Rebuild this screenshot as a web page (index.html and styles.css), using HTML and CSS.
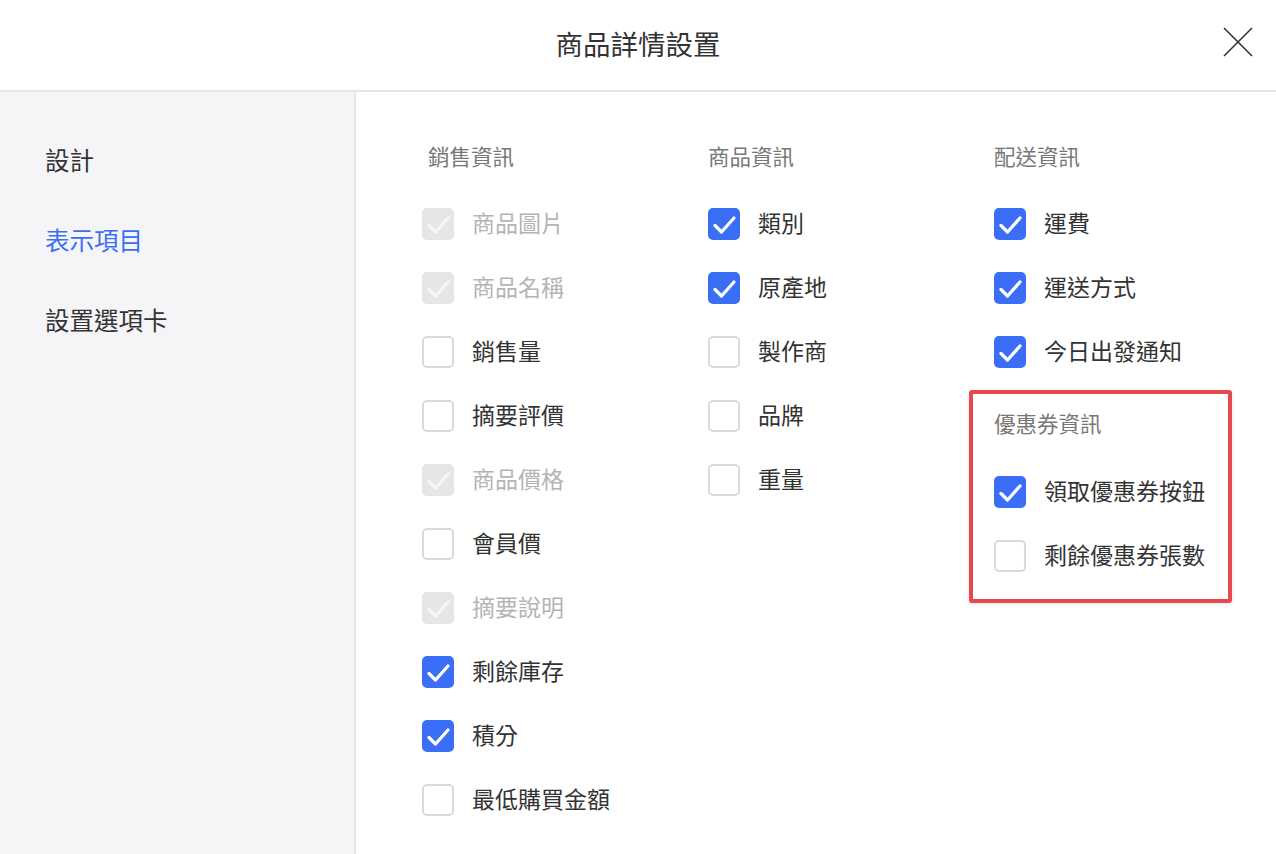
FILE: index.html
```html
<!DOCTYPE html>
<html lang="zh-Hant">
<head>
<meta charset="utf-8">
<title>商品詳情設置</title>
<link rel="stylesheet" href="styles.css">
</head>
<body>
<div class="modal">
  <header class="header">
    <div></div>
    <h1 class="title">商品詳情設置</h1>
    <button class="close" aria-label="close">
      <svg width="30" height="30" viewBox="0 0 30 30"><path d="M1 1 L29 29 M29 1 L1 29" stroke="#333" stroke-width="1.6" fill="none"/></svg>
    </button>
  </header>
  <div class="body">
    <nav class="sidebar">
      <div class="nav-item">設計</div>
      <div class="nav-item active">表示項目</div>
      <div class="nav-item">設置選項卡</div>
    </nav>
    <main class="content">
      <section class="col">
        <h2 class="col-title first">銷售資訊</h2>
        <label class="row disabled"><span class="cb checked-dis"><svg viewBox="0 0 32 32"><path d="M7 17.5 L13.5 24 L26 10"/></svg></span><span>商品圖片</span></label>
        <label class="row disabled"><span class="cb checked-dis"><svg viewBox="0 0 32 32"><path d="M7 17.5 L13.5 24 L26 10"/></svg></span><span>商品名稱</span></label>
        <label class="row"><span class="cb"></span><span>銷售量</span></label>
        <label class="row"><span class="cb"></span><span>摘要評價</span></label>
        <label class="row disabled"><span class="cb checked-dis"><svg viewBox="0 0 32 32"><path d="M7 17.5 L13.5 24 L26 10"/></svg></span><span>商品價格</span></label>
        <label class="row"><span class="cb"></span><span>會員價</span></label>
        <label class="row disabled"><span class="cb checked-dis"><svg viewBox="0 0 32 32"><path d="M7 17.5 L13.5 24 L26 10"/></svg></span><span>摘要說明</span></label>
        <label class="row"><span class="cb checked"><svg viewBox="0 0 32 32"><path d="M7 17.5 L13.5 24 L26 10"/></svg></span><span>剩餘庫存</span></label>
        <label class="row"><span class="cb checked"><svg viewBox="0 0 32 32"><path d="M7 17.5 L13.5 24 L26 10"/></svg></span><span>積分</span></label>
        <label class="row"><span class="cb"></span><span>最低購買金額</span></label>
      </section>
      <section class="col">
        <h2 class="col-title">商品資訊</h2>
        <label class="row"><span class="cb checked"><svg viewBox="0 0 32 32"><path d="M7 17.5 L13.5 24 L26 10"/></svg></span><span>類別</span></label>
        <label class="row"><span class="cb checked"><svg viewBox="0 0 32 32"><path d="M7 17.5 L13.5 24 L26 10"/></svg></span><span>原產地</span></label>
        <label class="row"><span class="cb"></span><span>製作商</span></label>
        <label class="row"><span class="cb"></span><span>品牌</span></label>
        <label class="row"><span class="cb"></span><span>重量</span></label>
      </section>
      <section class="col">
        <h2 class="col-title">配送資訊</h2>
        <label class="row"><span class="cb checked"><svg viewBox="0 0 32 32"><path d="M7 17.5 L13.5 24 L26 10"/></svg></span><span>運費</span></label>
        <label class="row"><span class="cb checked"><svg viewBox="0 0 32 32"><path d="M7 17.5 L13.5 24 L26 10"/></svg></span><span>運送方式</span></label>
        <label class="row"><span class="cb checked"><svg viewBox="0 0 32 32"><path d="M7 17.5 L13.5 24 L26 10"/></svg></span><span>今日出發通知</span></label>
        <div class="highlight">
          <h2 class="col-title">優惠券資訊</h2>
          <label class="row"><span class="cb checked"><svg viewBox="0 0 32 32"><path d="M7 17.5 L13.5 24 L26 10"/></svg></span><span>領取優惠券按鈕</span></label>
          <label class="row"><span class="cb"></span><span>剩餘優惠券張數</span></label>
        </div>
      </section>
    </main>
  </div>
</div>
</body>
</html>
```

FILE: styles.css
```css
* { box-sizing: border-box; }
html, body {
  margin: 0;
  padding: 0;
  height: 100%;
  background: #fff;
  font-family: "Noto Sans CJK TC", "Noto Sans", sans-serif;
  color: #333;
}
.modal {
  width: 1276px;
  height: 854px;
  display: flex;
  flex-direction: column;
  overflow: hidden;
}
.header {
  height: 92px;
  flex: none;
  display: grid;
  grid-template-columns: 1fr auto 1fr;
  align-items: center;
  border-bottom: 2px solid #e6e6e8;
  padding-bottom: 4px;
}
.title {
  margin: 0;
  font-size: 27.5px;
  font-weight: 400;
  color: #333;
  line-height: 40px;
}
.close {
  justify-self: end;
  margin-right: 22px;
  margin-top: -2px;
  width: 32px;
  height: 32px;
  padding: 0;
  border: 0;
  background: none;
  display: flex;
  align-items: center;
  justify-content: center;
}
.body {
  flex: 1;
  display: flex;
  min-height: 0;
}
.sidebar {
  width: 356px;
  flex: none;
  background: #f5f5f7;
  border-right: 2px solid #e6e6e8;
  padding: 28px 0 0 45px;
}
.nav-item {
  height: 80px;
  line-height: 80px;
  font-size: 24.5px;
  color: #333;
}
.nav-item.active { color: #3b6ef6; }
.content {
  flex: 1;
  display: flex;
  padding: 48px 0 0 66px;
}
.col {
  width: 286px;
  flex: none;
  display: flex;
  flex-direction: column;
}
.col-title {
  margin: 0 0 18px;
  font-size: 21.5px;
  font-weight: 400;
  line-height: 32px;
  color: #777;
}
.col-title.first { padding-left: 6px; }
.row {
  height: 64px;
  display: flex;
  align-items: center;
  gap: 18px;
  font-size: 23px;
  color: #333;
}
.row.disabled { color: #b4b4b4; }
.cb {
  width: 32px;
  height: 32px;
  flex: none;
  border-radius: 5px;
  border: 2px solid #d6d9de;
  background: #fff;
  display: flex;
  margin-top: 4px;
}
.cb svg { width: 100%; height: 100%; display: block; }
.cb path { fill: none; stroke: #fff; stroke-width: 3.2; stroke-linecap: round; stroke-linejoin: round; }
.cb.checked { border: 0; background: #3b6ef6; }
.cb.checked-dis { border: 0; background: #e6e6e6; }
.cb.checked-dis path { stroke: #f7f7f7; }
.highlight {
  margin: 8px 0 0 -25px;
  width: 263px;
  border: 4px solid #e5484d;
  border-radius: 3px;
  padding: 13px 0 13px 21px;
  box-shadow: 0 1px 4px rgba(0,0,0,0.12);
}
.highlight .col-title { margin-bottom: 19px; }
```
